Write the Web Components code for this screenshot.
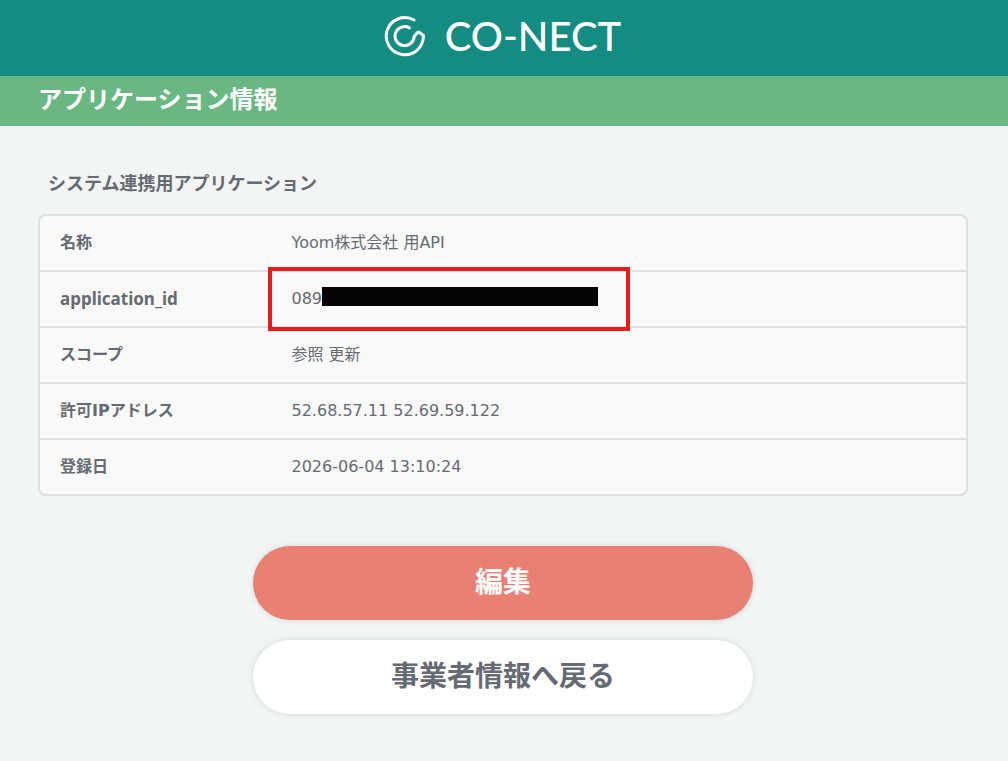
<!DOCTYPE html>
<html lang="ja">
<head>
<meta charset="utf-8">
<meta name="viewport" content="width=device-width, initial-scale=1">
<title>アプリケーション情報 | CO-NECT</title>
<style>
  body { margin: 0; background: #f2f5f4; color: #666a73; font: 16px/24px "DejaVu Sans", "Noto Sans CJK JP", sans-serif; }
  main { padding: 40px 40px 40px 38px; }
  nav { display: flex; flex-direction: column; align-items: center; gap: 20px; margin-top: 50px; }
</style>
</head>
<body>
<brand-header></brand-header>
<page-title>アプリケーション情報</page-title>
<main>
  <application-details>
    <span slot="heading">システム連携用アプリケーション</span>
    <span slot="name">Yoom株式会社 用API</span>
    <masked-value slot="id">089</masked-value>
    <span slot="scope">参照 更新</span>
    <span slot="ip">52.68.57.11 52.69.59.122</span>
    <span slot="date">2026-06-04 13:10:24</span>
  </application-details>
  <nav>
    <pill-button variant="primary">編集</pill-button>
    <pill-button>事業者情報へ戻る</pill-button>
  </nav>
</main>
<script>
  const define = (name, html) => customElements.define(name, class extends HTMLElement {
    constructor() {
      super();
      const template = document.createElement('template');
      template.innerHTML = html;
      this.attachShadow({ mode: 'open' }).append(template.content.cloneNode(true));
    }
  });

  define('brand-header', `
    <style>
      :host { display: block; background: #148c82; }
      header { display: flex; justify-content: center; align-items: center; height: 76px; }
      a { display: flex; align-items: center; gap: 18px; color: #fff; text-decoration: none; font: 500 40px/44px Lato, sans-serif; padding: 0 4px 4px 0; }
      svg { display: block; }
    </style>
    <header><a href="#">
      <svg width="44" height="44" viewBox="0 0 44 44" fill="none" stroke="#fff" stroke-width="3" stroke-linecap="round" stroke-linejoin="round" aria-hidden="true">
        <path d="M31 6A18.6 18.6 0 1 0 40.4 21.5L36.4 18.3Q35.3 17.6 34.3 18.7L32.2 21.3Q31.4 22.3 31 23.5A9.5 9.5 0 1 1 26.3 13.9"/>
      </svg>
      <span>CO-NECT</span></a></header>`);

  define('page-title', `
    <style>
      :host { display: block; background: #6bb783; color: #fff; }
      h1 { margin: 0; padding: 4px 38px 10px; font: 700 24px/36px "Noto Sans CJK JP", sans-serif; }
    </style>
    <h1><slot></slot></h1>`);

  define('masked-value', `
    <style>
      :host { display: flex; align-items: flex-start; }
      .mask { width: 276px; height: 19px; background: #040404; }
      .frame { position: absolute; z-index: 1; box-sizing: border-box; inset: -5px auto -5px -4px; width: 362px; border: 4px solid #e91c1c; pointer-events: none; }
    </style>
    <slot></slot><span class="mask"></span><span class="frame"></span>`);

  define('application-details', `
    <style>
      :host { display: block; }
      h2 { margin: 0; padding: 2px 10px 18px; font: 700 18px/28px "Noto Sans CJK JP", sans-serif; }
      .card { border: 2px solid #dde2dc; border-radius: 8px; background: #f9f9f9; overflow: hidden; }
      table { width: 100%; border-spacing: 0; table-layout: fixed; }
      th, td { height: 54px; box-sizing: border-box; padding: 0 20px; text-align: left; vertical-align: middle; }
      th { width: 25%; font-weight: 700; }
      td { position: relative; }
      tr + tr th, tr + tr td { height: 56px; border-top: 2px solid #dde2dc; }
      th.latin { font: 700 17px/24px "Noto Sans", sans-serif; }
    </style>
    <h2><slot name="heading"></slot></h2>
    <div class="card"><table>
      <tr><th scope="row">名称</th><td><slot name="name"></slot></td></tr>
      <tr><th scope="row" class="latin">application_id</th><td><slot name="id"></slot></td></tr>
      <tr><th scope="row">スコープ</th><td><slot name="scope"></slot></td></tr>
      <tr><th scope="row">許可IPアドレス</th><td><slot name="ip"></slot></td></tr>
      <tr><th scope="row">登録日</th><td><slot name="date"></slot></td></tr>
    </table></div>`);

  define('pill-button', `
    <style>
      :host { display: block; width: 100%; max-width: 500px; }
      button { display: block; width: 100%; margin: 0; padding: 14px 20px 20px; border: 0; border-radius: 37px; background: #fff; color: #666a73;
        font: 700 28px/40px "Noto Sans CJK JP", sans-serif; box-shadow: 0 0 6px rgba(90, 110, 130, .2); cursor: pointer; }
      :host([variant="primary"]) button { background: #e98074; color: #fff; }
    </style>
    <button type="button"><slot></slot></button>`);
</script>
</body>
</html>
